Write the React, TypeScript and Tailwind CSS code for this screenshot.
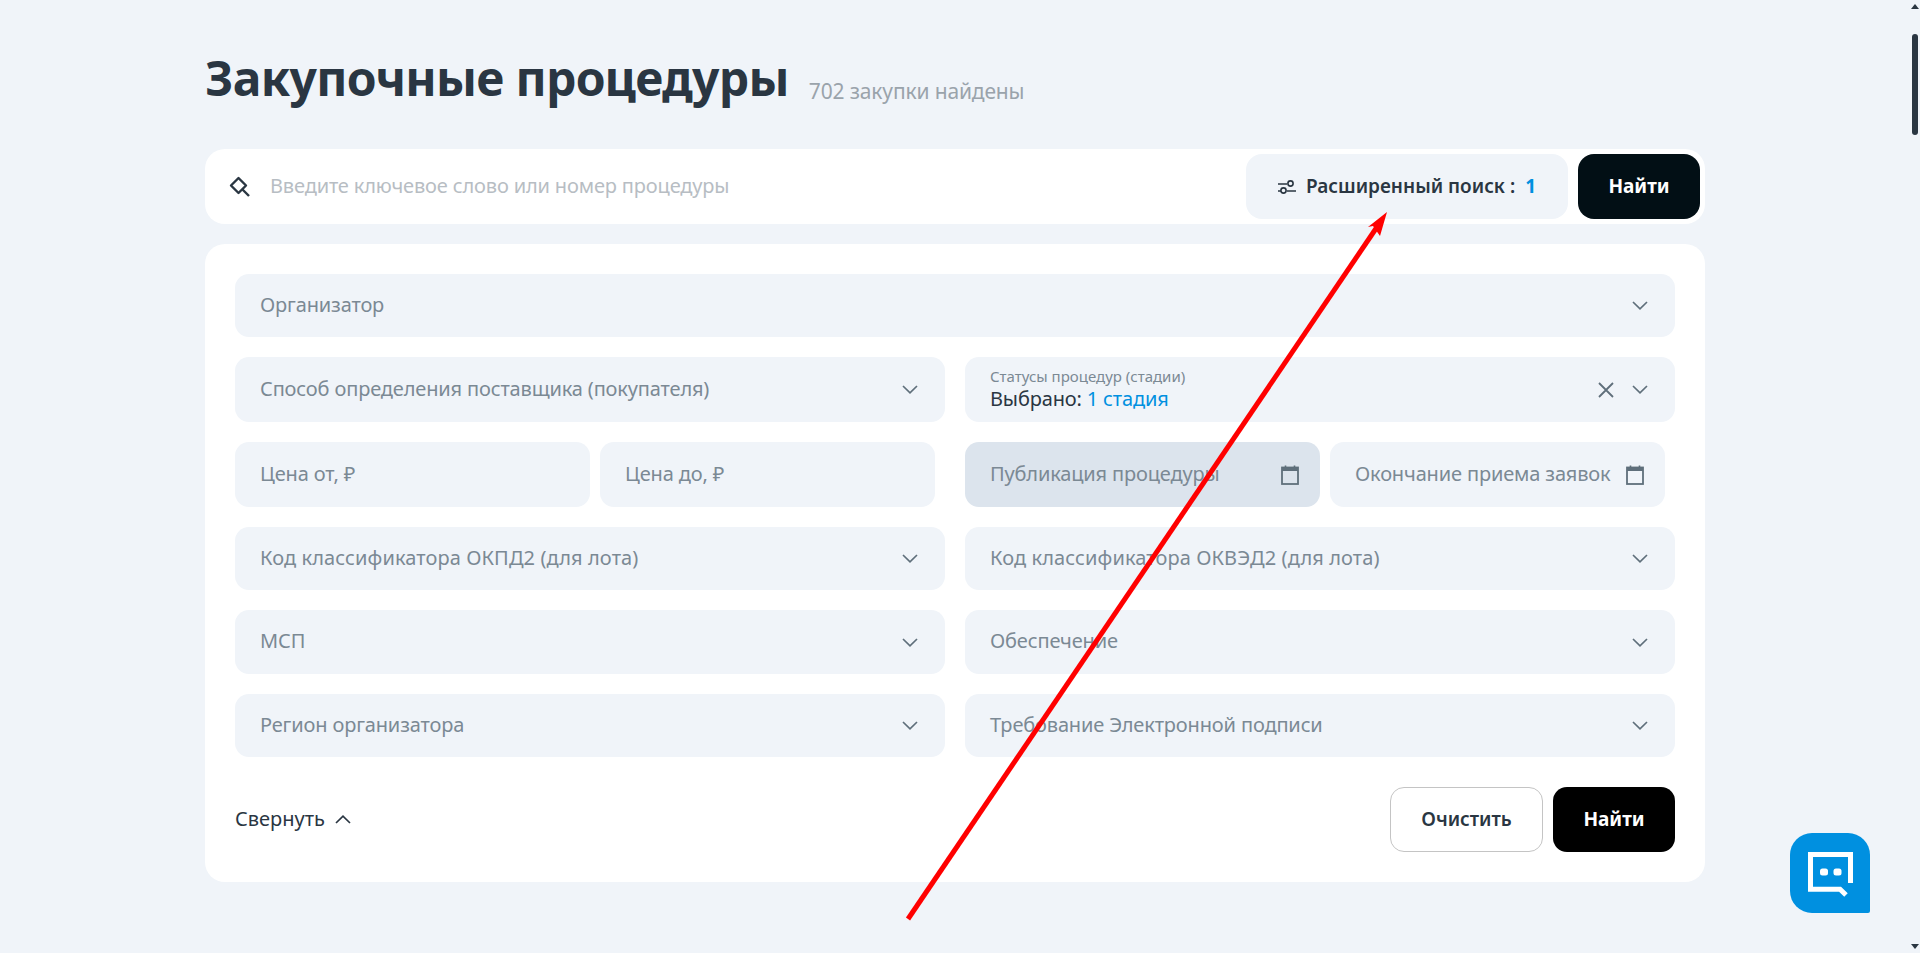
import React from "react";

const font = { fontFamily: '"Noto Sans", "Open Sans", sans-serif' };

function Chevron({ up = false, color = "#5f6f7b" }: { up?: boolean; color?: string }) {
  return (
    <svg width="16" height="9" viewBox="0 0 16 9" fill="none" className="shrink-0">
      <path d={up ? "M1 8L8 1.2L15 8" : "M1 1L8 7.8L15 1"} stroke={color} strokeWidth="1.7" />
    </svg>
  );
}

function Calendar() {
  return (
    <svg width="18" height="20" viewBox="0 0 18 20" fill="none" className="shrink-0">
      <path d="M4.5 0.5V3M13.5 0.5V3" stroke="#5f6f7b" strokeWidth="1.6" />
      <rect x="1" y="2.5" width="16" height="16.5" stroke="#5f6f7b" strokeWidth="1.8" />
      <rect x="1" y="2.5" width="16" height="3.5" fill="#5f6f7b" />
    </svg>
  );
}

function Select({ label, h = "h-[63px]", track = "tracking-[-0.15px]" }: { label: string; h?: string; track?: string }) {
  return (
    <div className={`${h} flex items-center justify-between rounded-[14px] bg-[#f0f4f9] pl-[25px] pr-[27px]`}>
      <span className={`pb-[2px] text-[20px] ${track} text-[#7b8994]`}>{label}</span>
      <Chevron />
    </div>
  );
}

function DateField({ label, active, w }: { label: string; active?: boolean; w: string }) {
  return (
    <div className={`${w} flex h-[65px] items-center justify-between rounded-[14px] pl-[25px] pr-[21px] ${active ? "bg-[#dce4ed]" : "bg-[#f0f4f9]"}`}>
      <span className="pb-[2px] text-[20px] tracking-[-0.15px] text-[#7b8994]">{label}</span>
      <Calendar />
    </div>
  );
}

function PriceField({ label, w }: { label: string; w: string }) {
  return (
    <div className={`${w} flex h-[65px] items-center rounded-[14px] bg-[#f0f4f9] pl-[25px]`}>
      <span className="pb-[2px] text-[20px] tracking-[-0.15px] text-[#7b8994]">{label}</span>
    </div>
  );
}

export default function App() {
  return (
    <div style={font} className="relative h-[953px] w-full overflow-hidden bg-[#f0f4f9]">
      <main className="mx-[205px] flex w-[1500px] flex-col pt-[48px]">
        <div className="flex h-[60px] items-end">
          <h1 className="text-[48px] font-bold leading-[60px] tracking-[-0.7px] text-[#2a3642]">Закупочные процедуры</h1>
          <span className="ml-[20px] pb-[2px] text-[21px] leading-[30px] tracking-[-0.15px] text-[#9aa3ab]">702 закупки найдены</span>
        </div>

        <div className="mt-[41px] flex h-[75px] items-center rounded-[20px] bg-white pr-[5px]">
          <svg width="22" height="22" viewBox="0 0 22 22" fill="none" className="ml-[24px] shrink-0">
            <path d="M9.5 2L17 9.5L9.5 17L2 9.5Z" stroke="#2a3642" strokeWidth="2.4" strokeLinejoin="round" />
            <path d="M13 13L20 20" stroke="#2a3642" strokeWidth="2.4" />
          </svg>
          <span className="ml-[19px] flex-1 pb-[1px] text-[20px] tracking-[-0.15px] text-[#b7bdc3]">Введите ключевое слово или номер процедуры</span>
          <div className="flex h-[65px] w-[322px] items-center justify-center rounded-[16px] bg-[#f0f4f9] text-[19px] font-semibold text-[#2a3642]">
            <svg width="18" height="14" viewBox="0 0 18 14" fill="none" className="mr-[10px] shrink-0">
              <path d="M0 4H9M0 11H3M9 11H18" stroke="#2a3642" strokeWidth="1.6" />
              <circle cx="12.5" cy="3.5" r="2.6" stroke="#2a3642" strokeWidth="1.6" />
              <circle cx="5.5" cy="10.5" r="2.6" stroke="#2a3642" strokeWidth="1.6" />
            </svg>
            <span>Расширенный поиск :</span>
            <span className="ml-[10px] font-bold text-[#0090e0]">1</span>
          </div>
          <button className="ml-[10px] h-[65px] w-[122px] rounded-[16px] bg-[#020f15] text-[19px] font-bold text-white">Найти</button>
        </div>

        <section className="mt-[20px] flex h-[638px] flex-col rounded-[20px] bg-white px-[30px] pt-[30px]">
          <Select label="Организатор" />
          <div className="mt-[20px] grid grid-cols-2 gap-[20px]">
            <Select label="Способ определения поставщика (покупателя)" h="h-[65px]" />
            <div className="flex h-[65px] items-center rounded-[14px] bg-[#f0f4f9] pl-[25px] pr-[27px]">
              <div className="flex flex-1 flex-col pb-[2px]">
                <span className="mb-[2px] text-[15px] leading-[18px] text-[#7b8994]">Статусы процедур (стадии)</span>
                <span className="text-[20px] leading-[24px] tracking-[-0.15px] text-[#2a3642]">
                  Выбрано: <span className="text-[#0090e0]">1 стадия</span>
                </span>
              </div>
              <svg width="18" height="18" viewBox="0 0 18 18" fill="none" className="mr-[17px] shrink-0">
                <path d="M2 2L16 16M16 2L2 16" stroke="#5f6f7b" strokeWidth="1.8" />
              </svg>
              <Chevron />
            </div>
          </div>
          <div className="mt-[20px] grid grid-cols-2 gap-[20px]">
            <div className="flex gap-[10px]">
              <PriceField label="Цена от, ₽" w="w-[355px]" />
              <PriceField label="Цена до, ₽" w="w-[335px]" />
            </div>
            <div className="flex gap-[10px]">
              <DateField label="Публикация процедуры" active w="w-[355px]" />
              <DateField label="Окончание приема заявок" w="w-[335px]" />
            </div>
          </div>
          <div className="mt-[20px] grid grid-cols-2 gap-[20px]">
            <Select label="Код классификатора ОКПД2 (для лота)" track="tracking-[0.1px]" />
            <Select label="Код классификатора ОКВЭД2 (для лота)" track="tracking-[0.1px]" />
          </div>
          <div className="mt-[20px] grid grid-cols-2 gap-[20px]">
            <Select label="МСП" h="h-[64px]" />
            <Select label="Обеспечение" h="h-[64px]" />
          </div>
          <div className="mt-[20px] grid grid-cols-2 gap-[20px]">
            <Select label="Регион организатора" />
            <Select label="Требование Электронной подписи" />
          </div>
          <div className="mt-[30px] flex items-center justify-between">
            <div className="flex items-center gap-[10px] pb-[1px] text-[20px] text-[#2a3642]">
              <span>Свернуть</span>
              <Chevron up color="#2a3642" />
            </div>
            <div className="flex gap-[10px]">
              <button className="h-[65px] w-[153px] rounded-[14px] border border-[#c4c4c4] bg-white text-[19px] font-semibold text-[#2a3642]">Очистить</button>
              <button className="h-[65px] w-[122px] rounded-[14px] bg-black text-[19px] font-bold text-white">Найти</button>
            </div>
          </div>
        </section>
      </main>

      <div className="absolute left-[1790px] top-[833px] h-[80px] w-[80px] rounded-[22px] rounded-br-[2px] bg-[#0090e0]">
        <svg width="80" height="80" viewBox="0 0 80 80" fill="none">
          <path d="M60.5 50V21.5H20.5V56.2H50L56 62" stroke="white" strokeWidth="5" />
          <rect x="30" y="35.5" width="8" height="7" rx="2.5" fill="white" />
          <rect x="43.5" y="35.5" width="8" height="7" rx="2.5" fill="white" />
        </svg>
      </div>

      <div className="absolute right-[2px] top-[34px] h-[101px] w-[6px] rounded-[3px] bg-[#2a3642]" />
      <svg width="8" height="5" viewBox="0 0 8 5" className="absolute right-[1px] top-[4px]"><path d="M4 0L8 5H0Z" fill="#2a3642" /></svg>
      <svg width="8" height="5" viewBox="0 0 8 5" className="absolute bottom-[4px] right-[1px]"><path d="M4 5L8 0H0Z" fill="#2a3642" /></svg>

      <svg width="1920" height="953" viewBox="0 0 1920 953" fill="none" className="pointer-events-none absolute left-0 top-0">
        <path d="M908 919L1377 227" stroke="#ff0000" strokeWidth="5" />
        <path d="M1387 212L1380 236L1373 226L1368 227Z" fill="#ff0000" />
      </svg>
    </div>
  );
}
